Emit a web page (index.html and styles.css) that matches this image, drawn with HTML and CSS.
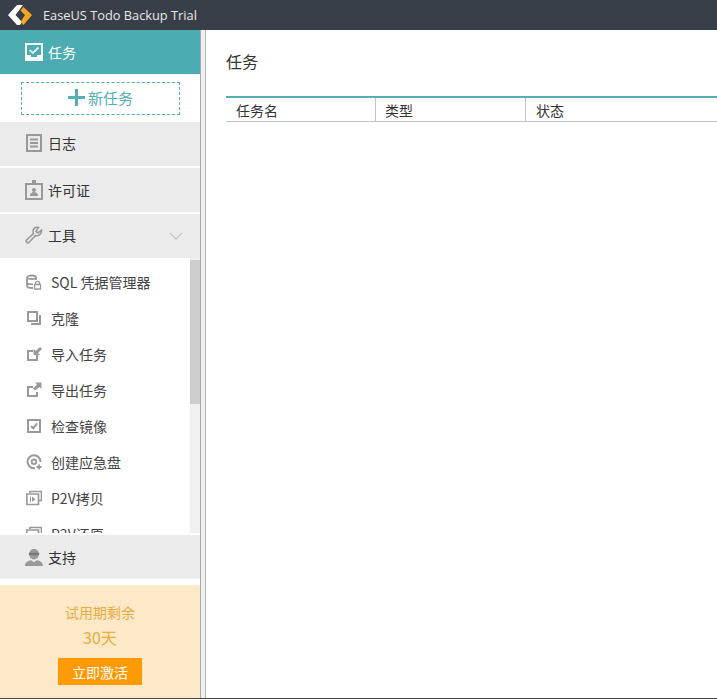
FILE: index.html
```html
<!DOCTYPE html>
<html lang="zh">
<head>
<meta charset="utf-8">
<title>EaseUS Todo Backup Trial</title>
<link rel="stylesheet" href="styles.css">
</head>
<body>
<header class="titlebar">
  <svg class="logo" width="24" height="20" viewBox="0 0 24 20"><path d="M9 0H15L7.500 10L14 17L12 20H9L0 10Z" fill="#fff"/><path d="M15.500 2L24 10L15.500 20L12.500 17L17 10L12.500 5.500Z" fill="#f7a51c"/></svg>
  <span class="app-title">EaseUS Todo Backup Trial</span>
</header>
<div class="main">
  <aside class="sidebar">
    <div class="nav active">
      <svg class="nav-icon" width="18" height="18" viewBox="0 0 18 18"><path fill="#fff" fill-rule="evenodd" d="M0 0H18V18H0ZM2 2V12H6V14H12V12H16V2Z"/><path d="M4.500 7L8 10L13.500 4.500" fill="none" stroke="#d8eff0" stroke-width="2"/></svg>
      <span>任务</span>
    </div>
    <div class="new-wrap"><div class="new-task"><svg width="17" height="17" viewBox="0 0 17 17"><path d="M7 0H10V7H17V10H10V17H7V10H0V7H7Z" fill="#55aeb0"/></svg><span>新任务</span></div></div>
    <div class="nav">
      <svg class="nav-icon" width="18" height="18" viewBox="0 0 18 18"><path fill="none" stroke="#999" stroke-width="2" d="M2 1H16V17H2Z"/><path stroke="#999" stroke-width="2" d="M5 5.500H13M5 9H13M5 12.500H13"/></svg>
      <span>日志</span>
    </div>
    <div class="nav license">
      <svg class="nav-icon" width="18" height="20" viewBox="0 0 18 20"><path fill="none" stroke="#999" stroke-width="2" d="M1 4H17V19H1Z"/><path fill="#999" d="M7 0H11V5H7ZM9 8a2 2 0 1 1-.01 0ZM5 16c0-3 2-4 4-4s4 1 4 4Z"/></svg>
      <span>许可证</span>
    </div>
    <div class="nav tools">
      <svg class="nav-icon" width="18" height="18" viewBox="0 0 18 18"><path fill="none" stroke="#999" stroke-width="1.600" d="M16.500 4L13 7L11 5.500L13.500 1.500C10.500 .5 8 2.500 8 5.500C8 6.500 8.200 7 8.500 7.500L1.500 14C.5 15.500 2.500 17.500 4 16.500L10.500 9.500C13.500 10.500 17 8 16.500 4Z"/></svg>
      <span>工具</span>
      <svg class="chevron" width="14" height="8" viewBox="0 0 14 8"><path d="M1 1L7 7L13 1" fill="none" stroke="#c4c4c4" stroke-width="1.200"/></svg>
    </div>
    <div class="tool-area">
      <ul class="tool-list">
        <li><svg width="16" height="16" viewBox="0 0 16 16"><path fill="none" stroke="#999" stroke-width="1.800" d="M1 3.500C1 .8 10 .8 10 3.500V6M1 3.500V12C1 13.500 3 14 7 14M1 3.500C1 5.500 10 5.500 10 3.500M1 8.500C1 10 4 10.300 7 10.300"/><path fill="none" stroke="#999" stroke-width="1.300" d="M9.500 10V9C9.500 6.800 13.500 6.800 13.500 9V10M8.500 10.500H14.500V15H8.500Z"/></svg><span>SQL 凭据管理器</span></li>
        <li><svg width="16" height="16" viewBox="0 0 16 16"><path fill="none" stroke="#999" stroke-width="2" d="M2 2H11V11H2Z"/><path fill="none" stroke="#999" stroke-width="2" d="M14 5V14H5"/></svg><span>克隆</span></li>
        <li><svg width="16" height="16" viewBox="0 0 16 16"><path fill="none" stroke="#999" stroke-width="2" d="M7 5H2V14H11V9"/><path fill="#999" d="M14 1L16 3L12 7L14 9H7.500V2.500L9.500 5Z"/></svg><span>导入任务</span></li>
        <li><svg width="16" height="16" viewBox="0 0 16 16"><path fill="none" stroke="#999" stroke-width="2" d="M7 5H2V14H11V10"/><path fill="#999" d="M9 8.500L7 6.500L11 2.500L9 .5H15.500V7L13.500 5Z"/></svg><span>导出任务</span></li>
        <li><svg width="16" height="16" viewBox="0 0 16 16"><path fill="none" stroke="#999" stroke-width="2" d="M2 2H14V14H2Z"/><path fill="none" stroke="#999" stroke-width="2" d="M5 8L7.300 10.300L11 5.500"/></svg><span>检查镜像</span></li>
        <li><svg width="16" height="16" viewBox="0 0 16 16"><path fill="none" stroke="#999" stroke-width="2" d="M9 14.200A6.500 6.500 0 1 1 14.500 8"/><circle cx="8" cy="7.800" r="2.300" fill="none" stroke="#999" stroke-width="1.800"/><path stroke="#999" stroke-width="1.800" d="M13 10.500V15.500M10.500 13H15.500"/></svg><span>创建应急盘</span></li>
        <li><svg width="16" height="16" viewBox="0 0 16 16"><path fill="none" stroke="#999" stroke-width="1.700" d="M4 3V1.500H15.500V10.500H13M.8 4H12.500V14.500H.8Z"/><path fill="#999" d="M4 6.500H5V12H4ZM6 6.500L9.500 9.300L6 12Z"/></svg><span>P2V拷贝</span></li>
        <li><svg width="16" height="16" viewBox="0 0 16 16"><path fill="none" stroke="#999" stroke-width="1.700" d="M4 3V1.500H15.500V10.500H13M.8 4H12.500V14.500H.8Z"/></svg><span>P2V还原</span></li>
      </ul>
      <div class="scrollbar"><div class="thumb"></div></div>
    </div>
    <div class="nav support">
      <svg class="nav-icon" width="18" height="19" viewBox="0 0 19 18"><path fill="#999" d="M9.500 0C13 0 14.500 2.500 14.500 5.500C14.500 8.500 12.500 11 9.500 11C6.500 11 4.500 8.500 4.500 5.500C4.500 2.500 6 0 9.500 0ZM0 18C0 14.500 3 12.500 6.500 12L9.500 14L12.500 12C16 12.500 19 14.500 19 18Z"/><path fill="#777" d="M4 4H15V6.500H4Z"/></svg>
      <span>支持</span>
    </div>
    <div class="trial">
      <div class="trial-label">试用期剩余</div>
      <div class="trial-days">30天</div>
      <div class="activate">立即激活</div>
    </div>
  </aside>
  <div class="divider"></div>
  <main class="content">
    <h1 class="heading">任务</h1>
    <div class="task-table">
      <div class="col">任务名</div>
      <div class="col col-type">类型</div>
      <div class="col">状态</div>
    </div>
  </main>
</div>
</body>
</html>
```

FILE: styles.css
```css
* { box-sizing: border-box; }
html, body { margin: 0; height: 100%; }
body {
  width: 717px; height: 699px; overflow: hidden; background: #fff; color: #333;
  font-family: "Noto Sans CJK SC", "Noto Sans", sans-serif; font-size: 14px;
  display: flex; flex-direction: column;
  border-bottom: 1px solid #444;
}
.titlebar { height: 30px; flex: none; background: #393f48; display: flex; align-items: center; padding-left: 8px; color: #e8e8e8; }
.logo { margin-right: 11px; }
.app-title { font-family: "Open Sans", sans-serif; font-size: 12.8px; }
.main { flex: 1; display: flex; min-height: 0; }
.sidebar { width: 200px; flex: none; display: flex; flex-direction: column; background: #fff; }
.divider { width: 6px; flex: none; background: #f0f0f0; border-left: 1px solid #aaa; border-right: 1px solid #b0b4b8; }
.nav { height: 44px; flex: none; display: flex; align-items: center; padding: 0 0 2px 25px; background: #ebebeb; margin-bottom: 2px; font-size: 14px; color: #333; }
.nav-icon { margin-right: 5px; flex: none; }
.nav.active { background: #4bacb1; color: #fff; margin-bottom: 0; padding-bottom: 0; }
.nav.license { padding-bottom: 0; }
.new-wrap { height: 48px; flex: none; padding: 8px 20px 0 21px; }
.new-task { height: 33px; border: 1px dashed #55aeb0; display: flex; align-items: center; justify-content: center; color: #55aeb0; font-size: 15px; padding: 0 0 2px 0; }
.new-task svg { margin-right: 3px; }
.tools { position: relative; }
.chevron { position: absolute; right: 17px; top: 18px; }
.tool-area { height: 275px; flex: none; display: flex; overflow: hidden; margin: -2px 0 2px; }
.tool-list { list-style: none; margin: 0; padding: 0 0 0 26px; flex: 1; }
.tool-list li { height: 36px; display: flex; align-items: center; color: #444; font-size: 14px; }
.tool-list li:first-child { margin-top: 6px; }
.tool-list svg { margin-right: 9px; flex: none; }
.scrollbar { width: 10px; background: #f0f0f0; }
.thumb { height: 144px; margin-top: 2px; background: #cdcdcd; }
.support { margin-bottom: 6px; padding-bottom: 0; }
.trial { flex: 1; background: #fde9c8; display: flex; flex-direction: column; align-items: center; color: #eaab3e; }
.trial-label { margin-top: 17px; line-height: 20px; }
.trial-days { font-size: 16px; line-height: 24px; margin-top: 3px; }
.activate { width: 84px; height: 27px; background: #fe9a03; color: #fff; margin-top: 9px; display: flex; align-items: center; justify-content: center; }
.content { flex: 1; padding: 19px 0 0 20px; min-width: 0; }
.heading { margin: 0; font-weight: 400; font-size: 16px; line-height: 24px; color: #333; }
.task-table { display: flex; margin-top: 23px; border-top: 2px solid #55aeb0; border-bottom: 1px solid #c4c4c4; height: 26px; }
.col { width: 150px; padding-left: 10px; border-right: 1px solid #c4c4c4; color: #333; line-height: 24px; font-size: 14px; }
.col-type { padding-left: 9px; }
.col:last-child { flex: 1; border-right: 0; }
```
